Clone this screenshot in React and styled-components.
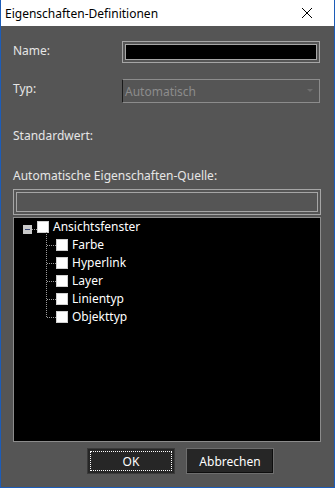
import styled, { createGlobalStyle } from "styled-components";

const Global = createGlobalStyle`
    html, body {
        margin: 0;
        padding: 0;
        background: #555555;
    }
    body {
        font-family: "Noto Sans", "Liberation Sans", sans-serif;
        font-size: 12px;
    }
`
const Window = styled.div`
    width: 335px;
    height: 488px;
    box-sizing: border-box;
    display: flex;
    flex-direction: column;
    border: 1px solid #1c5cb8;
    border-top: none;
    background: #555555;
`
const TitleBar = styled.div`
    height: 26px;
    flex: none;
    background: #ffffff;
    display: flex;
    align-items: center;
    justify-content: space-between;
    padding: 0 0 0 4px;
    color: #000;
    font-size: 12px;
`
const CloseButton = styled.div`
    width: 46px;
    height: 26px;
    display: flex;
    align-items: center;
    justify-content: center;
    margin-right: 4px;
`
const Body = styled.div`
    flex: 1;
    display: flex;
    flex-direction: column;
    padding: 15px 13px 0 12px;
    color: #e6e6e6;
`
const FieldRow = styled.div`
    display: grid;
    grid-template-columns: 109px 198px;
    align-items: start;
    margin-bottom: ${p => p.$gap || 0}px;
`
const Label = styled.div`
    line-height: 16px;
    padding-top: ${p => p.$top || 0}px;
    margin-top: ${p => p.$mt || 0}px;
    margin-bottom: ${p => p.$mb || 0}px;
    white-space: nowrap;
`
const DoubleBox = styled.div`
    height: ${p => p.$h}px;
    box-sizing: border-box;
    border: 1px solid #a6a6a6;
    padding: 2px;
`
const Inner = styled.div`
    height: 100%;
    box-sizing: border-box;
    border: 1px solid #a6a6a6;
    background: ${p => p.$bg};
`
const Combo = styled.div`
    height: 24px;
    box-sizing: border-box;
    border: 1px solid #8c8c8c;
    border-left-color: #1a1a1a;
    display: flex;
    align-items: center;
    justify-content: space-between;
    padding: 0 6px 0 2px;
    color: #8c8c8c;
    font-size: 12px;
`
const Tree = styled.div`
    height: 225px;
    box-sizing: border-box;
    margin-top: 2px;
    background: #000;
    border: 1px solid #8c8c8c;
    padding: 0 0 0 9px;
    color: #fff;
`
const Node = styled.div`
    height: 18px;
    display: flex;
    align-items: center;
    position: relative;
    padding-left: ${p => p.$indent}px;
    line-height: 14px;
`
const Expander = styled.div`
    width: 9px;
    height: 9px;
    box-sizing: border-box;
    background: #c9c9c9;
    display: flex;
    align-items: center;
    justify-content: center;
    margin-top: 4px;
    &::after {
        content: "";
        width: 5px;
        height: 1px;
        background: #3b4a7a;
    }
`
const Connector = styled.div`
    width: ${p => p.$w}px;
    height: 0;
    border-top: 1px dotted #9a9a9a;
    margin-top: ${p => p.$mt || 0}px;
`
const VLine = styled.div`
    position: absolute;
    left: 23px;
    top: ${p => p.$top}px;
    height: ${p => p.$h}px;
    border-left: 1px dotted #9a9a9a;
`
const Check = styled.div`
    width: 12px;
    height: 12px;
    box-sizing: border-box;
    background: #fff;
    border: 1px solid #d0d0d0;
    margin-right: 4px;
    flex: none;
`
const Children = styled.div`
    position: relative;
`
const Buttons = styled.div`
    display: flex;
    justify-content: flex-start;
    gap: 11px;
    padding: 6px 0 0 74px;
`
const Button = styled.div`
    width: 88px;
    height: 26px;
    box-sizing: border-box;
    background: #262626;
    border: 1px solid ${p => p.$focus ? "#3a3a3a" : "#6e6e6e"};
    box-shadow: ${p => p.$focus ? "none" : "inset -1px -1px 0 #0e0e0e"};
    color: #fff;
    display: flex;
    align-items: center;
    justify-content: center;
    font-size: 12px;
    padding: 2px;
`
const Focus = styled.div`
    flex: 1;
    align-self: stretch;
    border: 1px dotted ${p => p.$on ? "#ffffff" : "transparent"};
    display: flex;
    align-items: center;
    justify-content: center;
`

const children = ["Farbe", "Hyperlink", "Layer", "Linientyp", "Objekttyp"];

const App = () => {
    return (
        <Window>
            <Global />
            <TitleBar>
                <span>Eigenschaften-Definitionen</span>
                <CloseButton>
                    <svg width="12" height="12" viewBox="0 0 12 12">
                        <path d="M1 1 L11 11 M11 1 L1 11" stroke="#000" strokeWidth="1" />
                    </svg>
                </CloseButton>
            </TitleBar>
            <Body>
                <FieldRow $gap={16}>
                    <Label $top={2}>Name:</Label>
                    <DoubleBox $h={22}><Inner $bg="#000" /></DoubleBox>
                </FieldRow>
                <FieldRow>
                    <Label $top={2}>Typ:</Label>
                    <Combo>
                        <span>Automatisch</span>
                        <svg width="6" height="4" viewBox="0 0 6 4">
                            <path d="M0 0 H6 L3 3 Z" fill="#6e6e6e" />
                        </svg>
                    </Combo>
                </FieldRow>
                <Label $mt={25}>Standardwert:</Label>
                <Label $mt={24} $mb={5}>Automatische Eigenschaften-Quelle:</Label>
                <DoubleBox $h={26}><Inner $bg="#555555" /></DoubleBox>
                <Tree>
                    <Node $indent={0}>
                        <Expander />
                        <Connector $w={5} $mt={4} />
                        <Check />
                        <span>Ansichtsfenster</span>
                    </Node>
                    <Children>
                        <VLine $top={-4} $h={13 + 18 * 4} />
                        {children.map(c => (
                            <Node key={c} $indent={24}>
                                <Connector $w={9} />
                                <Check />
                                <span>{c}</span>
                            </Node>
                        ))}
                    </Children>
                </Tree>
                <Buttons>
                    <Button $focus><Focus $on>OK</Focus></Button>
                    <Button><Focus>Abbrechen</Focus></Button>
                </Buttons>
            </Body>
        </Window>
    )
}

export default App;
